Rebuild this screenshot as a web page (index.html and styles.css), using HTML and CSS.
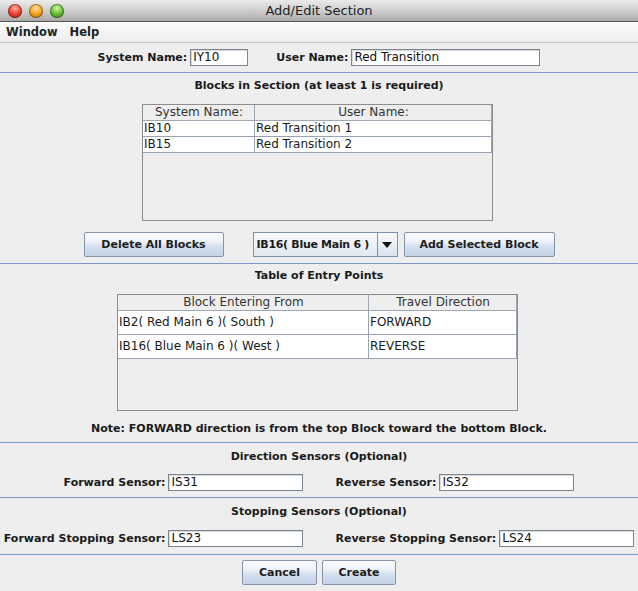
FILE: index.html
```html
<!DOCTYPE html>
<html>
<head>
<meta charset="utf-8">
<title>Add/Edit Section</title>
<link rel="stylesheet" href="styles.css">
</head>
<body>
<div class="window">
  <div class="titlebar">
    <div class="lights">
      <span class="light red"></span>
      <span class="light orange"></span>
      <span class="light green"></span>
    </div>
    <div class="title">Add/Edit Section</div>
  </div>
  <div class="menubar">
    <span class="menu-item">Window</span>
    <span class="menu-item">Help</span>
  </div>

  <div class="section sec-names">
    <div class="field-row names-row">
      <label class="label">System Name:</label>
      <div class="textfield tf-sys">IY10</div>
      <label class="label gap-label">User Name:</label>
      <div class="textfield tf-user">Red Transition</div>
    </div>
  </div>

  <div class="section sec-blocks">
    <div class="heading">Blocks in Section (at least 1 is required)</div>
    <div class="table-box blocks-table">
      <div class="trow thead">
        <div class="cell c-sys">System Name:</div>
        <div class="cell c-user">User Name:</div>
      </div>
      <div class="trow tbody">
        <div class="cell c-sys">IB10</div>
        <div class="cell c-user">Red Transition 1</div>
      </div>
      <div class="trow tbody">
        <div class="cell c-sys">IB15</div>
        <div class="cell c-user">Red Transition 2</div>
      </div>
    </div>
    <div class="button-row">
      <button class="btn btn-delete">Delete All Blocks</button>
      <div class="combo">
        <span class="combo-text">IB16( Blue Main 6 )</span>
        <span class="combo-arrow"><span class="tri"></span></span>
      </div>
      <button class="btn btn-add">Add Selected Block</button>
    </div>
  </div>

  <div class="section sec-entry">
    <div class="heading">Table of Entry Points</div>
    <div class="table-box entry-table">
      <div class="trow thead">
        <div class="cell c-from">Block Entering From</div>
        <div class="cell c-dir">Travel Direction</div>
      </div>
      <div class="trow tbody tall">
        <div class="cell c-from">IB2( Red Main 6 )( South )</div>
        <div class="cell c-dir">FORWARD</div>
      </div>
      <div class="trow tbody tall">
        <div class="cell c-from">IB16( Blue Main 6 )( West )</div>
        <div class="cell c-dir">REVERSE</div>
      </div>
    </div>
    <div class="note">Note: FORWARD direction is from the top Block toward the bottom Block.</div>
  </div>

  <div class="section sec-dir">
    <div class="heading">Direction Sensors (Optional)</div>
    <div class="field-row sensor-row">
      <label class="label">Forward Sensor:</label>
      <div class="textfield tf-sensor">IS31</div>
      <label class="label gap-label2">Reverse Sensor:</label>
      <div class="textfield tf-sensor">IS32</div>
    </div>
  </div>

  <div class="section sec-stop">
    <div class="heading">Stopping Sensors (Optional)</div>
    <div class="field-row sensor-row">
      <label class="label">Forward Stopping Sensor:</label>
      <div class="textfield tf-sensor">LS23</div>
      <label class="label gap-label2">Reverse Stopping Sensor:</label>
      <div class="textfield tf-sensor">LS24</div>
    </div>
  </div>

  <div class="footer">
    <button class="btn btn-small">Cancel</button>
    <button class="btn btn-small">Create</button>
  </div>
</div>
</body>
</html>
```

FILE: styles.css
```css
* { box-sizing: border-box; }
html, body { margin: 0; padding: 0; }
body {
  background: #eeeeee;
  font-family: "DejaVu Sans", "Liberation Sans", sans-serif;
  color: #1a1a1a;
  width: 638px;
  height: 591px;
  overflow: hidden;
}
.window { width: 638px; display: flex; flex-direction: column; }

.titlebar {
  height: 22px;
  background: linear-gradient(#ebebeb, #c8c8c8 60%, #a9a9a9);
  border-bottom: 1px solid #585858;
  position: relative;
  display: flex;
  align-items: center;
  justify-content: center;
}
.lights { position: absolute; left: 8px; top: 4px; display: flex; gap: 7px; }
.light {
  width: 14px; height: 14px; border-radius: 50%;
  box-shadow: inset 0 0 0 1px rgba(0,0,0,0.35);
}
.red { background: radial-gradient(circle at 50% 30%, #ffb3a8 0, #f0483c 45%, #b0100a 100%); }
.orange { background: radial-gradient(circle at 50% 30%, #ffe7a6 0, #f5a623 45%, #b56a05 100%); }
.green { background: radial-gradient(circle at 50% 30%, #d8f7a8 0, #6bc23a 45%, #2d7c0e 100%); }
.title { font-size: 13px; color: #1e1e1e; line-height: 21px; }

.menubar {
  height: 21px;
  background: linear-gradient(#fcfcfc, #ededed);
  border-bottom: 1px solid #c4c4c4;
  display: flex;
  align-items: center;
  padding-left: 6px;
  gap: 12px;
}
.menu-item { font-size: 11.5px; font-weight: bold; color: #222; }

.section { border-bottom: 1px solid #7b98c9; display: flex; flex-direction: column; align-items: center; }
.sec-names { padding: 6px 0 6px; }
.sec-blocks { padding: 5px 0 6px; }
.sec-entry { padding: 4px 0 5px; }
.sec-dir { padding: 6px 0 6px; }
.sec-stop { padding: 6px 0 7px; }

.heading, .note { font-size: 11px; font-weight: bold; line-height: 16px; color: #1a1a1a; white-space: nowrap; }
.note { margin-top: 10px; }

.field-row { display: flex; align-items: center; }
.label { font-size: 11px; font-weight: bold; margin-right: 3px; line-height: 17px; white-space: nowrap; }
.gap-label { margin-left: 28px; }
.gap-label2 { margin-left: 32px; }
.textfield {
  height: 17px;
  background: #fff;
  border: 1px solid #7a8694;
  box-shadow: inset 1px 1px 0 #d8d8d8;
  font-size: 12px;
  line-height: 15px;
  padding-left: 2px;
  color: #111;
  white-space: nowrap;
}
.tf-sys { width: 58px; }
.tf-user { width: 189px; }
.tf-sensor { width: 135px; }
.sensor-row { margin-top: 9px; }
.sec-stop .sensor-row { margin-top: 10px; }

.table-box {
  border: 1px solid #8d8d8d;
  background: #eeeeee;
  height: 117px;
  margin-top: 10px;
}
.blocks-table { width: 351px; margin-right: 3px; }
.entry-table { width: 401px; margin-right: 3px; }
.trow { display: flex; }
.cell {
  font-size: 12px;
  line-height: 15px;
  padding-left: 1px;
  white-space: nowrap;
  overflow: hidden;
}
.thead .cell {
  background: #eeeeee;
  color: #333;
  text-align: center;
  border-bottom: 1px solid #9ea7b2;
  border-right: 1px solid #9ea7b2;
}
.tbody .cell {
  background: #fff;
  border-bottom: 1px solid #97a3b1;
  border-right: 1px solid #97a3b1;
}
.tall .cell { line-height: 23px; }
.c-sys { width: 112px; }
.c-user { width: 237px; }
.c-from { width: 251px; }
.c-dir { width: 148px; }

.button-row { display: flex; align-items: center; margin-top: 11px; }
.btn {
  font-family: "DejaVu Sans", "Liberation Sans", sans-serif;
  font-size: 11px;
  font-weight: bold;
  color: #1e1e1e;
  height: 25px;
  border: 1px solid #8593ab;
  border-radius: 2px;
  background: linear-gradient(#fdfdfe, #e9eef6 45%, #d5e0ef 55%, #c6d4e8);
  padding: 0;
}
.btn-delete { width: 140px; }
.btn-add { width: 151px; margin-left: 6px; }
.combo {
  margin-left: 29px;
  width: 145px;
  height: 25px;
  display: flex;
}
.combo-text {
  flex: 1;
  border: 1px solid #7f90aa;
  background: linear-gradient(#f7f9fc, #e2e8f1);
  font-size: 11px;
  letter-spacing: -0.3px;
  font-weight: bold;
  line-height: 23px;
  padding-left: 3px;
  white-space: nowrap;
  overflow: hidden;
}
.combo-arrow {
  width: 20px;
  border: 1px solid #7f90aa;
  border-left: none;
  background: linear-gradient(#f7f9fc, #d9e2ee);
  display: flex;
  align-items: center;
  justify-content: center;
}
.tri {
  width: 0; height: 0;
  border-left: 5px solid transparent;
  border-right: 5px solid transparent;
  border-top: 6px solid #111;
}

.footer { display: flex; justify-content: center; gap: 5px; padding-top: 5px; }
.btn-small { width: 75px; }
.footer .btn:last-child { width: 74px; }
```
